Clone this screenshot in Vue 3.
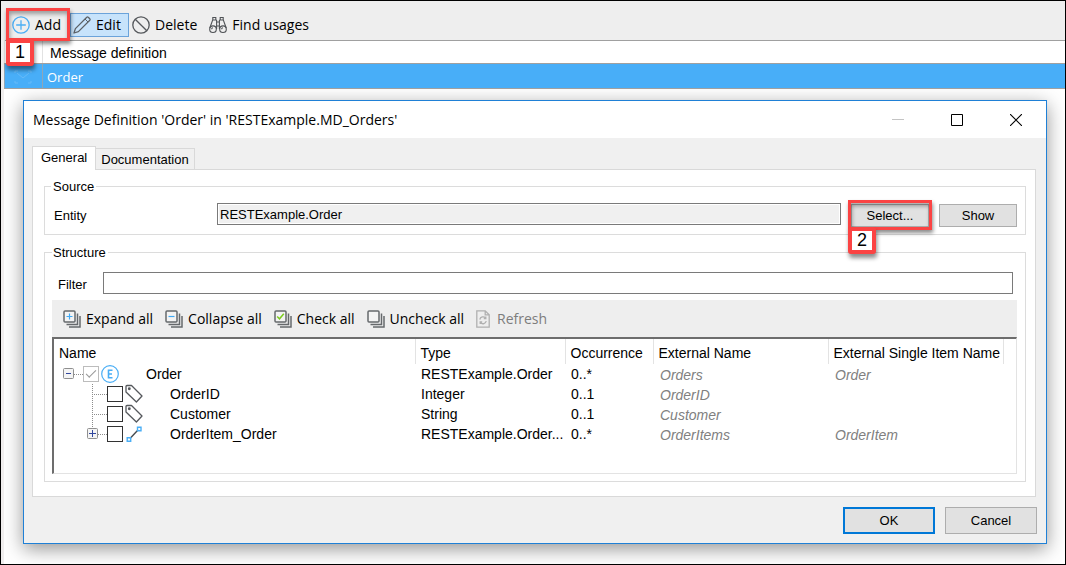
<script setup>
import { ref } from 'vue'

const filter = ref('')
const entity = ref('RESTExample.Order')

const rows = ref([
  { name: 'Order', type: 'RESTExample.Order', occurrence: '0..*', external: 'Orders', single: 'Order', kind: 'entity', checked: true, root: true },
  { name: 'OrderID', type: 'Integer', occurrence: '0..1', external: 'OrderID', single: '', kind: 'attribute', checked: false },
  { name: 'Customer', type: 'String', occurrence: '0..1', external: 'Customer', single: '', kind: 'attribute', checked: false },
  { name: 'OrderItem_Order', type: 'RESTExample.Order...', occurrence: '0..*', external: 'OrderItems', single: 'OrderItem', kind: 'association', checked: false, last: true }
])

const treeActions = [
  { label: 'Expand all', mark: 'plus' },
  { label: 'Collapse all', mark: 'minus' },
  { label: 'Check all', mark: 'check' },
  { label: 'Uncheck all', mark: 'none' }
]
</script>

<template>
  <main class="page">
    <div class="toolbar" role="toolbar" aria-label="Message definitions">
      <div class="marked">
        <button class="tool add" type="button">
          <svg width="18" height="18" viewBox="0 0 18 18" fill="none" stroke="#4aaef5" stroke-width="1.3">
            <circle cx="9" cy="9" r="8.2" />
            <path d="M9 4.2v9.6M4.2 9h9.6" />
          </svg>
          <span>Add</span>
        </button>
        <span class="frame frame-add"></span>
        <span class="badge badge-add">1</span>
      </div>
      <button class="tool edit" type="button">
        <svg width="18" height="18" viewBox="0 0 18 18" fill="none" stroke="#5c6166" stroke-width="1.3" stroke-linejoin="round">
          <path d="M1 17l1.400-4.400L13.800 1.200q.7-.5 1.400 0l1.600 1.600q.6.700 0 1.400L5.400 15.600z" />
          <path d="M12 3l3 3" stroke-width="1" />
        </svg>
        <span>Edit</span>
      </button>
      <button class="tool delete" type="button">
        <svg width="18" height="18" viewBox="0 0 18 18" fill="none" stroke="#55585c" stroke-width="1.300">
          <circle cx="9" cy="9" r="8.200" />
          <path d="M3.200 3.200l11.600 11.600" />
        </svg>
        <span>Delete</span>
      </button>
      <button class="tool find" type="button">
        <svg width="18" height="18" viewBox="0 0 18 18" fill="none" stroke="#4f5256" stroke-width="1.100">
          <circle cx="4" cy="13.200" r="3.300" />
          <circle cx="14" cy="13.200" r="3.300" />
          <path d="M2.600 13.200a1.400 1.400 0 0 1 1.400-1.400M12.600 13.200a1.400 1.400 0 0 1 1.400-1.400" />
          <path d="M.8 12L3.800 3.600V1.500h3V3.500l.8 1V13M17.200 12L14.200 3.600V1.500h-3V3.500l-.8 1V13M7.600 6h2.800M7.600 10h2.800M3.800 4h3.200M11 4h3.200" />
        </svg>
        <span>Find usages</span>
      </button>
    </div>

    <table class="definitions">
      <colgroup><col class="icon-col" /><col /></colgroup>
      <thead>
        <tr><th></th><th scope="col">Message definition</th></tr>
      </thead>
      <tbody>
        <tr>
          <td>
            <svg class="envelope" width="18" height="14" viewBox="0 0 18 14" fill="none" stroke="#66baf8">
              <path d="M1 3V1h3M14 1h3v2M1 11v2h3M14 13h3v-2M3 3l6 5 6-5" />
            </svg>
          </td>
          <td>Order</td>
        </tr>
      </tbody>
    </table>

    <div class="desk">
      <section class="dialog" role="dialog" aria-labelledby="dialog-title">
        <header class="titlebar">
          <h1 id="dialog-title">Message Definition 'Order' in 'RESTExample.MD_Orders'</h1>
          <div class="window-buttons">
            <button type="button" aria-label="Minimize" disabled>
              <svg width="12" height="12" viewBox="0 0 12 12" stroke="#c4c4c4"><path d="M0 5.500h12" /></svg>
            </button>
            <button type="button" aria-label="Maximize">
              <svg width="12" height="12" viewBox="0 0 12 12" fill="none" stroke="#000"><path d="M.5.5h11v11H.5z" /></svg>
            </button>
            <button type="button" aria-label="Close">
              <svg width="12" height="12" viewBox="0 0 12 12" stroke="#000" stroke-width="1.100"><path d="M0 0l12 12M12 0L0 12" /></svg>
            </button>
          </div>
        </header>

        <div class="tabs" role="tablist">
          <button class="tab active" type="button" role="tab" aria-selected="true">General</button>
          <button class="tab" type="button" role="tab" aria-selected="false">Documentation</button>
        </div>

        <div class="panel" role="tabpanel">
          <fieldset class="source">
            <legend>Source</legend>
            <div class="entity-row">
              <label for="entity">Entity</label>
              <input id="entity" v-model="entity" type="text" readonly />
              <div class="marked">
                <button class="push" type="button">Select...</button>
                <span class="frame frame-select"></span>
                <span class="badge badge-select">2</span>
              </div>
              <button class="push" type="button">Show</button>
            </div>
          </fieldset>

          <fieldset class="structure">
            <legend>Structure</legend>
            <div class="filter-row">
              <label for="filter">Filter</label>
              <input id="filter" v-model="filter" type="text" />
            </div>

            <div class="tree-tools" role="toolbar" aria-label="Structure">
              <button v-for="action in treeActions" :key="action.label" class="tool" type="button">
                <svg width="18" height="18" viewBox="0 0 18 18" fill="none">
                  <path d="M14.500 3.500v11h-11M17 6v11H6" stroke="#66696c" stroke-width="1.500" />
                  <rect x="1" y="1" width="11" height="11" rx="1" fill="#f3f3f3" stroke="#66696c" stroke-width="1.500" />
                  <path v-if="action.mark === 'plus'" d="M6.500 3.500v6M3.500 6.500h6" stroke="#3fa9f5" stroke-width="1.200" />
                  <path v-if="action.mark === 'minus'" d="M3.500 6.500h6" stroke="#3fa9f5" stroke-width="1.200" />
                  <path v-if="action.mark === 'check'" d="M3.200 6.500l2.300 2.300 4.300-5" stroke="#7ccc1f" stroke-width="1.500" />
                </svg>
                <span>{{ action.label }}</span>
              </button>
              <button class="tool refresh" type="button" disabled>
                <svg width="14" height="18" viewBox="0 0 14 18" fill="none" stroke="#b0b0b0" stroke-width="1.300">
                  <path d="M.8.8h8.400l4 4v12.400H.8zM9.200.8v4h4" />
                  <path d="M3.800 9.500a3.300 3.300 0 0 1 5.700-1.500M10.200 11a3.300 3.300 0 0 1-5.700 1.600M9.800 6.500V8.600H7.800M4.200 14v-2h2" />
                </svg>
                <span>Refresh</span>
              </button>
            </div>

            <div class="tree">
              <table>
                <colgroup>
                  <col /><col class="c-type" /><col class="c-occ" /><col class="c-ext" /><col class="c-ext" /><col class="c-rest" />
                </colgroup>
                <thead>
                  <tr>
                    <th scope="col">Name</th>
                    <th scope="col">Type</th>
                    <th scope="col">Occurrence</th>
                    <th scope="col">External Name</th>
                    <th scope="col">External Single Item Name</th>
                    <th></th>
                  </tr>
                </thead>
                <tbody>
                  <tr v-for="row in rows" :key="row.name">
                    <td>
                      <div class="node">
                        <svg v-if="row.root" width="29" height="20" viewBox="0 0 29 20" fill="none">
                          <path d="M20 10.500h9" stroke="#8c8c8c" stroke-dasharray="1 1" />
                          <rect x="9.500" y="4.500" width="10" height="10" rx="1" fill="#f4f4f4" stroke="#8f8f8f" />
                          <path d="M12 9.500h5" stroke="#31479e" />
                        </svg>
                        <svg v-else width="53" height="20" viewBox="0 0 53 20" fill="none">
                          <path :d="row.last ? 'M38.500 0v10M38 10.500h15' : 'M38.500 0v20M38 10.500h15'" stroke="#8c8c8c" stroke-dasharray="1 1" />
                          <template v-if="row.last">
                            <rect x="33.500" y="4.500" width="10" height="10" rx="1" fill="#f4f4f4" stroke="#8f8f8f" />
                            <path d="M35 9.500h7M38.500 6v7" stroke="#31479e" />
                          </template>
                        </svg>
                        <input v-model="row.checked" type="checkbox" :disabled="row.root" :aria-label="row.name" />
                        <svg v-if="row.kind === 'entity'" class="kind" width="20" height="20" viewBox="0 0 20 20" fill="none" stroke="#4aaef5">
                          <circle cx="10" cy="10" r="8.300" stroke-width="1.200" />
                          <path d="M12.500 6.200H8.500v7.600h4M8 10h4" stroke-width="1.600" />
                        </svg>
                        <svg v-else-if="row.kind === 'attribute'" class="kind" width="20" height="20" viewBox="0 0 20 20" fill="none" stroke="#55585c" stroke-width="1.300" stroke-linejoin="round">
                          <path d="M2 2.500Q2 1.500 3 1.500H7.500L18 12l-5.600 6L2 8z" />
                          <circle cx="5.300" cy="4.800" r=".8" fill="#55585c" />
                        </svg>
                        <svg v-else class="kind" width="20" height="20" viewBox="0 0 20 20" fill="none">
                          <path d="M6 14.500L14 6" stroke="#45494d" stroke-width="1.400" />
                          <path d="M3.200 13.700h3.500v3.500H3.200zM13.500 3.200H17v3.500h-3.500z" stroke="#4aaef5" stroke-width="1.400" />
                        </svg>
                        <span>{{ row.name }}</span>
                      </div>
                    </td>
                    <td>{{ row.type }}</td>
                    <td>{{ row.occurrence }}</td>
                    <td class="ext">{{ row.external }}</td>
                    <td class="ext">{{ row.single }}</td>
                    <td></td>
                  </tr>
                </tbody>
              </table>
            </div>
          </fieldset>
        </div>

        <footer class="actions">
          <button class="push ok" type="button">OK</button>
          <button class="push" type="button">Cancel</button>
        </footer>
      </section>
    </div>
  </main>
</template>

<style>
body {
  margin: 0;
}
</style>

<style scoped>
*,
*::before,
*::after {
  box-sizing: border-box;
}

.page {
  display: flex;
  flex-direction: column;
  min-height: 100vh;
  padding-left: 3px;
  border: 1px solid #000;
  background: #f0eeee;
  color: #000;
  font-family: "Liberation Sans", Arial, sans-serif;
  font-size: 13px;
  line-height: 16px;
}

button,
input {
  margin: 0;
  font: inherit;
  color: inherit;
}

svg {
  display: block;
  flex: none;
}

table {
  width: 100%;
  border-collapse: collapse;
  table-layout: fixed;
}

th,
td {
  padding: 0;
  font-weight: normal;
  text-align: left;
  white-space: nowrap;
}

/* Toolbars */
.toolbar {
  display: flex;
  align-items: center;
  height: 39px;
  padding: 8px 4px 0;
  background: #eee;
  margin-left: -3px;
}

.tool {
  display: flex;
  align-items: center;
  gap: 5px;
  height: 24px;
  padding: 0;
  border: 0;
  background: none;
  font-family: "Open Sans", "Noto Sans", sans-serif;
  font-size: 14px;
  line-height: 20px;
  white-space: nowrap;
}

.marked {
  position: relative;
}

.add {
  width: 65px;
  padding-left: 7px;
}

.edit {
  width: 59px;
  padding-left: 2px;
  border: 1px solid #6ba3da;
  background: #c7e3fb;
}

.delete {
  margin-left: 3px;
}

.find {
  margin-left: 12px;
}

.frame {
  position: absolute;
  border: 3px solid #fb4343;
  box-shadow: 1px 3px 4px rgba(0, 0, 0, 0.45), inset 1px 3px 4px rgba(0, 0, 0, 0.35);
  pointer-events: none;
}

.frame-add {
  inset: -5px 0 -4px 1px;
}

.frame-select {
  inset: -3px;
}

.badge {
  position: absolute;
  z-index: 1;
  width: 28px;
  height: 27px;
  border: 4px solid #fb4343;
  border-radius: 3px;
  background: #fff;
  box-shadow: 1px 4px 4px rgba(0, 0, 0, 0.45);
  font-size: 18px;
  line-height: 18px;
  text-align: center;
}

.badge-add {
  top: 26px;
  left: 1px;
}

.badge-select {
  top: 24px;
  left: -3px;
}

/* List behind the dialog */
.definitions {
  border-top: 1px solid #a0a0a0;
  border-left: 1px solid #a0a0a0;
  background: #fff;
}

.icon-col {
  width: 38px;
}

.definitions th {
  height: 23px;
  padding: 1px 0 0 7px;
  border-left: 1px solid #e2e2e2;
  border-bottom: 1px solid #a0a0a0;
  font-size: 14px;
}

.definitions td {
  height: 25px;
  padding: 2px 0 0 4px;
  border-left: 1px solid #8fa6b8;
  border-bottom: 1px solid #a0a0a0;
  background: #48aef8;
  color: #fff;
  font-family: "Open Sans", "Noto Sans", sans-serif;
}

.envelope {
  margin-left: 5px;
}

.desk {
  flex: 1;
  padding: 11px 18px 20px 19px;
  overflow: hidden;
  background: #fff;
}

/* Dialog window */
.dialog {
  border: 1px solid #1f80d6;
  background: #f0f0f0;
  box-shadow: 0 5px 18px rgba(0, 0, 0, 0.42);
}

.titlebar {
  display: flex;
  align-items: center;
  justify-content: space-between;
  height: 37px;
  padding: 0 24px 0 9px;
  background: #fff;
}

h1 {
  margin: 0;
  font-family: "Open Sans", "Noto Sans", sans-serif;
  font-size: 14px;
  font-weight: normal;
  line-height: 20px;
}

.window-buttons {
  display: flex;
  gap: 47px;
}

.window-buttons button {
  padding: 0;
  border: 0;
  background: none;
}

.tabs {
  display: flex;
  align-items: flex-end;
  padding: 8px 8px 0;
}

.tab {
  height: 21px;
  padding: 2px 5px 0;
  border: 1px solid #d9d9d9;
  border-left: 0;
  border-bottom: 0;
  background: #f0f0f0;
}

.tab.active {
  z-index: 1;
  height: 24px;
  margin-bottom: -1px;
  padding: 0 8px 2px;
  border-left: 1px solid #d9d9d9;
  background: #fff;
}

.panel {
  margin: 0 10px 0 8px;
  padding: 9px 9px 14px 11px;
  border: 1px solid #d9d9d9;
  background: #fff;
}

fieldset {
  min-width: 0;
  margin: 0;
  border: 1px solid #dcdcdc;
}

legend {
  height: 15px;
  padding: 0 2px;
  line-height: 16px;
}

.source {
  padding: 9px 8px 7px 6px;
}

.entity-row {
  display: flex;
  align-items: flex-start;
}

.entity-row label {
  width: 166px;
  padding: 5px 0 0 3px;
}

input[type="text"] {
  flex: 1;
  min-width: 0;
  height: 22px;
  padding: 0 3px;
  border: 1px solid #7a7a7a;
  border-radius: 0;
  background: #fff;
}

input[readonly] {
  padding: 0 2px;
  background: #f0f0f0;
  box-shadow: inset 0 0 0 1px #fff;
}

.push {
  display: block;
  width: 78px;
  height: 23px;
  padding: 0;
  border: 1px solid #adadad;
  background: #e1e1e1;
}

.entity-row .push {
  margin-top: 1px;
}

.entity-row .marked {
  margin: 0 10px;
}

.structure {
  margin-top: 10px;
  padding: 12px 8px 7px 7px;
}

.structure legend {
  padding-left: 1px;
}

.filter-row {
  display: flex;
  align-items: center;
  padding-right: 4px;
}

.filter-row label {
  width: 51px;
  padding: 3px 0 0 6px;
}

.tree-tools {
  display: flex;
  align-items: center;
  gap: 12px;
  height: 37px;
  margin-top: 6px;
  padding-left: 11px;
  background: #eee;
}

.refresh {
  gap: 7px;
  color: #7d7d7d;
}

/* Structure tree */
.tree {
  height: 137px;
  overflow: hidden;
  border: 1px solid #e3e3e3;
  border-top: 2px solid #6d6d6d;
  border-left: 2px solid #6d6d6d;
  font-size: 14px;
}

.c-type {
  width: 150px;
}

.c-occ {
  width: 88px;
}

.c-ext {
  width: 175px;
}

.c-rest {
  width: 13px;
}

.tree th {
  height: 25px;
  padding: 2px 0 0 5px;
  border-right: 1px solid #e3e3e3;
}

.tree th:last-child {
  border-right: 0;
}

.tree td {
  height: 20px;
  padding-left: 6px;
}

.tree td:first-child {
  padding-left: 0;
}

.tree td.ext {
  padding: 2px 0 0 7px;
  color: #808080;
  font-style: italic;
}

.node {
  display: flex;
  align-items: center;
  height: 20px;
}

.node input {
  position: relative;
  flex: none;
  width: 16px;
  height: 16px;
  appearance: none;
  border: 1px solid #333;
  background: #fff;
}

.node input:disabled {
  border-color: #bcbcbc;
}

.node input:checked::after {
  content: "";
  position: absolute;
  top: 3px;
  left: 2px;
  width: 10px;
  height: 5px;
  border-left: 1px solid #999;
  border-bottom: 1px solid #999;
  transform: rotate(-45deg);
}

.kind {
  margin: 0 26px 0 1px;
}

/* Dialog buttons */
.actions {
  display: flex;
  justify-content: flex-end;
  gap: 10px;
  padding: 10px 9px 9px;
}

.actions .push {
  width: 92px;
  height: 27px;
}

.actions .ok {
  border: 2px solid #0078d7;
}
</style>
